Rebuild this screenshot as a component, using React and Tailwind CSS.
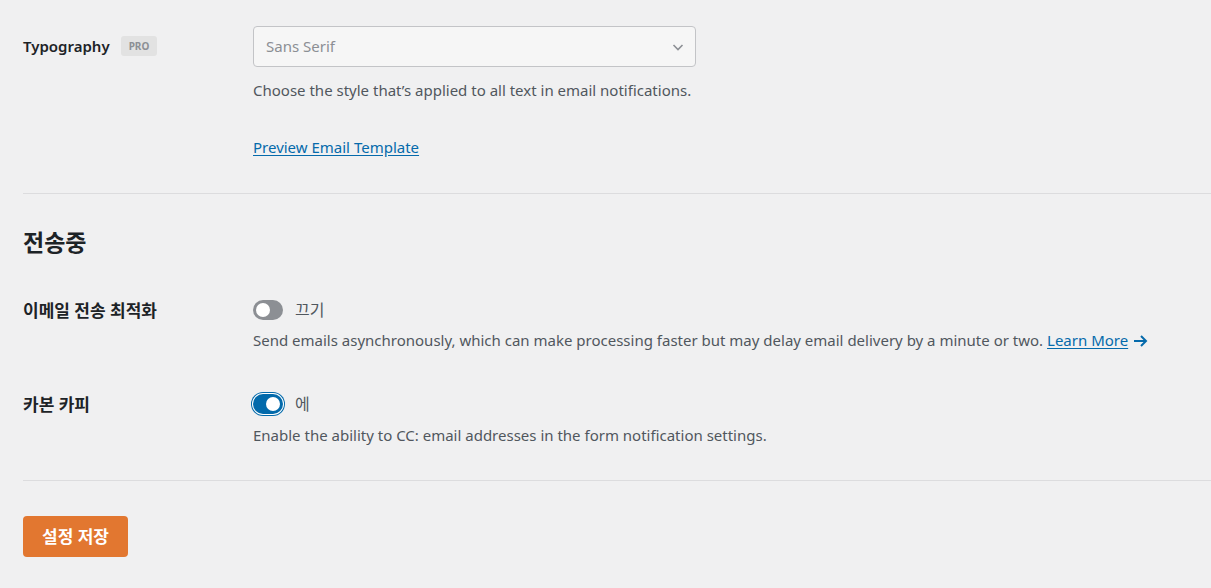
import React from "react";

const font = { fontFamily: '"Noto Sans", "Noto Sans CJK KR", sans-serif' };

function Toggle({ on }) {
  if (on) {
    return (
      <span className="inline-flex h-[20px] w-[30px] items-center justify-end rounded-full bg-[#036aab] px-[3px] shadow-[0_0_0_1px_#fff,0_0_0_2px_#036aab]">
        <span className="h-[14px] w-[14px] rounded-full bg-white" />
      </span>
    );
  }
  return (
    <span className="inline-flex h-[20px] w-[30px] items-center justify-start rounded-full bg-[#8c8f94] px-[3px]">
      <span className="h-[14px] w-[14px] rounded-full bg-white" />
    </span>
  );
}

export default function App() {
  return (
    <div
      className="min-h-[588px] w-full bg-[#f0f0f1] pl-[23px] text-[15px] text-[#50575e]"
      style={font}
    >
      <div className="flex pt-[26px] pb-[35px]">
        <div className="flex w-[230px] items-start pt-[9px]">
          <span className="text-[15px] font-semibold text-[#1d2327]">Typography</span>
          <span className="ml-[11px] mt-[1px] rounded-[3px] bg-[#e2e2e2] px-[8px] py-[3px] text-[10px] font-bold leading-[14px] text-[#8c8f94]">
            PRO
          </span>
        </div>
        <div className="flex flex-col">
          <div className="flex h-[41px] w-[443px] items-center justify-between rounded-[4px] border border-[#c3c4c7] bg-[#f6f6f6] pl-[12px] pr-[10px] text-[#8c8f94]">
            <span>Sans Serif</span>
            <svg width="14" height="14" viewBox="0 0 14 14" fill="none">
              <path d="M2.5 5 L7 9.5 L11.5 5" stroke="#8c8f94" strokeWidth="1.6" />
            </svg>
          </div>
          <p className="mt-[12px] leading-[22px]">
            Choose the style that’s applied to all text in email notifications.
          </p>
          <a className="mt-[35px] leading-[22px] text-[#056aab] underline underline-offset-2" href="#">
            Preview Email Template
          </a>
        </div>
      </div>

      <div className="h-px bg-[#dcdcde]" />

      <h2 className="pt-[33px] text-[23px] font-bold leading-[30px] text-[#1d2327]">전송중</h2>

      <div className="flex pt-[42px]">
        <div className="w-[230px] text-[17px] font-semibold leading-[24px] text-[#1d2327]">이메일 전송 최적화</div>
        <div className="flex flex-col">
          <div className="flex h-[22px] items-center gap-[12px]">
            <Toggle on={false} />
            <span className="text-[16px] text-[#50575e]">끄기</span>
          </div>
          <p className="mt-[8px] leading-[22px]">
            Send emails asynchronously, which can make processing faster but may delay email delivery by a minute or two.{" "}
            <a href="#" className="text-[#056aab] underline underline-offset-2">Learn More</a>
            <span className="ml-[5px] inline-block align-[-2px]">
              <svg width="15" height="14" viewBox="0 0 15 14" fill="none">
                <path d="M1 7 H13 M8 2 L13 7 L8 12" stroke="#056aab" strokeWidth="2" />
              </svg>
            </span>
          </p>
        </div>
      </div>

      <div className="flex pt-[42px] pb-[34px]">
        <div className="w-[230px] text-[17px] font-semibold leading-[24px] text-[#1d2327]">카본 카피</div>
        <div className="flex flex-col">
          <div className="flex h-[22px] items-center gap-[12px]">
            <Toggle on={true} />
            <span className="text-[16px] text-[#50575e]">에</span>
          </div>
          <p className="mt-[9px] leading-[22px]">
            Enable the ability to CC: email addresses in the form notification settings.
          </p>
        </div>
      </div>

      <div className="h-px bg-[#dcdcde]" />

      <div className="pt-[35px]">
        <button className="h-[41px] rounded-[4px] bg-[#e27730] px-[19px] text-[17px] font-semibold text-white">
          설정 저장
        </button>
      </div>
    </div>
  );
}
